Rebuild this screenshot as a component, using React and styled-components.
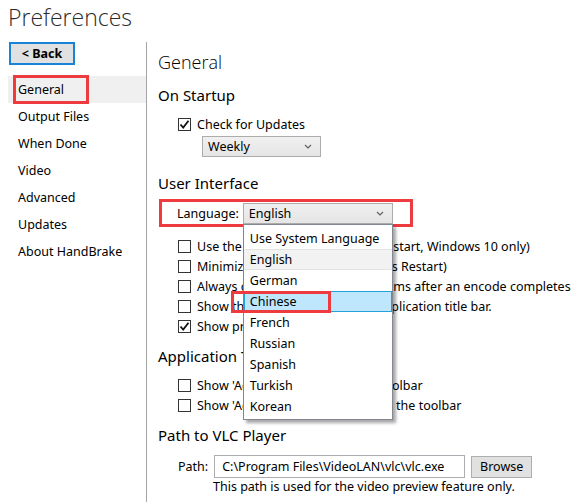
import React from 'react'
import styled, { createGlobalStyle } from 'styled-components'

const Global = createGlobalStyle`
  html, body { margin: 0; padding: 0; background: #fff; }
  body { font-family: "Noto Sans", "Liberation Sans", sans-serif; }
`;

const Page = styled.div`
  width: 575px;
  height: 502px;
  overflow: hidden;
  display: flex;
  flex-direction: column;
  padding-left: 8px;
  box-sizing: border-box;
  color: #000;
  font-size: 12.5px;
`;

const Title = styled.h1`
  margin: 0;
  height: 42px;
  font-family: "Open Sans", "Noto Sans", sans-serif;
  font-weight: 300;
  font-size: 23px;
  line-height: 34px;
  color: #2a2a2a;
`;

const Body = styled.div`
  flex: 1;
  display: flex;
`;

const Sidebar = styled.div`
  width: 138px;
  border-right: 1px solid #a5a5a5;
  display: flex;
  flex-direction: column;
`;

const BackButton = styled.button`
  margin-left: 1px;
  width: 66px;
  height: 23px;
  border: 2px solid #1883d7;
  background: #e1e1e1;
  font-family: inherit;
  font-size: 12.5px;
  font-weight: 700;
  padding: 0;
  color: #000;
`;

const NavList = styled.div`
  margin-top: 11px;
  display: flex;
  flex-direction: column;
`;

const NavItem = styled.div`
  position: relative;
  height: 27px;
  line-height: 27px;
  padding-left: 10px;
  background: ${p => (p.$active ? '#f0f0f0' : 'transparent')};
`;

const RedBox = styled.span`
  position: absolute;
  border: 3px solid #ee3b3f;
  box-sizing: border-box;
  pointer-events: none;
`;

const Main = styled.div`
  flex: 1;
  padding-left: 11px;
  display: flex;
  flex-direction: column;
`;

const MainTitle = styled.h2`
  margin: 7px 0 0;
  font-family: "Open Sans", "Noto Sans", sans-serif;
  font-weight: 300;
  font-size: 18px;
  line-height: 26px;
`;

const SectionTitle = styled.h3`
  margin: ${p => p.$top || 10}px 0 ${p => p.$bottom ?? 9}px;
  font-weight: 400;
  font-size: 15px;
  line-height: 20px;
`;

const Rows = styled.div`
  display: flex;
  flex-direction: column;
  padding-left: 20px;
`;

const CheckRow = styled.label`
  display: flex;
  align-items: center;
  height: 20px;
  gap: 6px;
  white-space: nowrap;
`;

const Box = styled.span`
  width: 13px;
  height: 13px;
  border: 1px solid #333;
  box-sizing: border-box;
  display: flex;
  align-items: center;
  justify-content: center;
  flex-shrink: 0;
  background: #fff;
`;

const Combo = styled.div`
  width: ${p => p.$w}px;
  height: 21px;
  border: 1px solid #acacac;
  box-sizing: border-box;
  background: linear-gradient(#f0f0f0, #e5e5e5);
  display: flex;
  align-items: center;
  justify-content: space-between;
  padding: 0 8px 0 5px;
  margin-left: ${p => p.$ml || 0}px;
  margin-top: ${p => p.$mt || 0}px;
`;

const LangWrap = styled.div`
  margin: 6px 0 9px 1px;
  width: 254px;
  height: 28px;
  border: 3px solid #ee3b3f;
  box-sizing: border-box;
  display: flex;
  align-items: center;
  padding-left: 15px;
  gap: 4px;
`;

const ComboAnchor = styled.div`
  position: relative;
`;

const DropList = styled.div`
  position: absolute;
  top: 21px;
  left: 0;
  width: 150px;
  padding: 3px 0 2px;
  background: #fff;
  border: 1px solid #828790;
  box-sizing: border-box;
  box-shadow: 3px 3px 3px rgba(0, 0, 0, 0.35);
  z-index: 5;
`;

const DropItem = styled.div`
  position: relative;
  height: 21px;
  line-height: 20px;
  padding-left: 5px;
  box-sizing: border-box;
  background: ${p => (p.$hover ? '#bee6fd' : p.$current ? '#f2f2f2' : 'transparent')};
  border: 1px solid ${p => (p.$hover ? '#26a0da' : 'transparent')};
  border-top-color: ${p => (p.$hover ? '#26a0da' : p.$current ? '#e2e2e2' : 'transparent')};
  border-bottom-color: ${p => (p.$hover ? '#26a0da' : p.$current ? '#e2e2e2' : 'transparent')};
`;

const PathRow = styled.div`
  display: flex;
  align-items: center;
  padding-left: 20px;
  height: 23px;
  gap: 6px;
`;

const TextInput = styled.div`
  width: 251px;
  height: 23px;
  border: 1px solid #abadb3;
  box-sizing: border-box;
  line-height: 21px;
  padding-left: 7px;
  white-space: nowrap;
  overflow: hidden;
`;

const Button = styled.button`
  width: 61px;
  height: 22px;
  border: 1px solid #adadad;
  background: #e1e1e1;
  font-family: inherit;
  font-size: 12.5px;
  padding: 0;
  color: #000;
`;

const Note = styled.div`
  padding-left: 55px;
  line-height: 17px;
`;

function Chevron() {
  return (
    <svg width="8" height="5" viewBox="0 0 8 5">
      <polyline points="1,1 4,4 7,1" fill="none" stroke="#606060" strokeWidth="1.2" />
    </svg>
  )
}

function Check({ checked, children }) {
  return (
    <CheckRow>
      <Box>
        {checked && (
          <svg width="11" height="11" viewBox="0 0 11 11">
            <polyline points="1.5,5.5 4.2,8.5 9.5,1.8" fill="none" stroke="#111" strokeWidth="1.8" />
          </svg>
        )}
      </Box>
      <span>{children}</span>
    </CheckRow>
  )
}

const navItems = ['General', 'Output Files', 'When Done', 'Video', 'Advanced', 'Updates', 'About HandBrake'];
const languages = ['Use System Language', 'English', 'German', 'Chinese', 'French', 'Russian', 'Spanish', 'Turkish', 'Korean'];

export default function App() {
  return (
    <Page>
      <Global />
      <Title>Preferences</Title>
      <Body>
        <Sidebar>
          <BackButton>&lt; Back</BackButton>
          <NavList>
            {navItems.map((n, i) => (
              <NavItem key={n} $active={i === 0}>
                {n}
                {i === 0 && <RedBox style={{ left: 5, top: -1, width: 76, height: 29 }} />}
              </NavItem>
            ))}
          </NavList>
        </Sidebar>
        <Main>
          <MainTitle>General</MainTitle>
          <SectionTitle $top={10}>On Startup</SectionTitle>
          <Rows>
            <Check checked>Check for Updates</Check>
            <Combo $w={119} $ml={24} $mt={2}>Weekly<Chevron /></Combo>
          </Rows>
          <SectionTitle $top={16} $bottom={0}>User Interface</SectionTitle>
          <LangWrap>
            <span>Language:</span>
            <ComboAnchor>
              <Combo $w={150}>English<Chevron /></Combo>
              <DropList>
                {languages.map(l => (
                  <DropItem key={l} $current={l === 'English'} $hover={l === 'Chinese'}>
                    {l}
                    {l === 'Chinese' && <RedBox style={{ left: -14, top: -1, width: 100, height: 22 }} />}
                  </DropItem>
                ))}
              </DropList>
            </ComboAnchor>
          </LangWrap>
          <Rows>
            <Check>Use the Dark Theme (Requires Restart, Windows 10 only)</Check>
            <Check>Minimize to System Tray (Requires Restart)</Check>
            <Check>Always clear completed queue items after an encode completes</Check>
            <Check>Show the encode status in the application title bar.</Check>
            <Check checked>Show preset panel</Check>
          </Rows>
          <SectionTitle>Application Toolbar</SectionTitle>
          <Rows>
            <Check>Show 'Add All to Queue' on the toolbar</Check>
            <Check>Show 'Add Selection to Queue' on the toolbar</Check>
          </Rows>
          <SectionTitle $top={10} $bottom={10}>Path to VLC Player</SectionTitle>
          <PathRow>
            <span>Path:</span>
            <TextInput>C:\Program Files\VideoLAN\vlc\vlc.exe</TextInput>
            <Button>Browse</Button>
          </PathRow>
          <Note>This path is used for the video preview feature only.</Note>
        </Main>
      </Body>
    </Page>
  )
}
